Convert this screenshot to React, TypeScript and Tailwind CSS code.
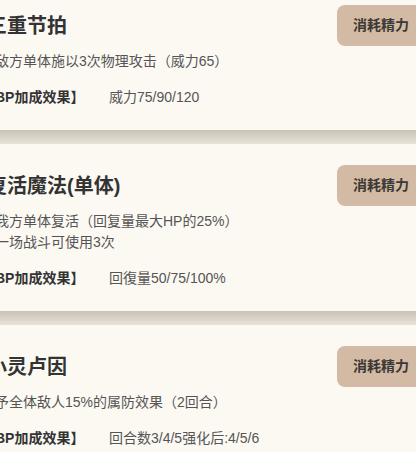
import React from 'react';

type Skill = {
  name: string;
  desc: string[];
  bp: string;
};

const skills: Skill[] = [
  { name: '三重节拍', desc: ['对敌方单体施以3次物理攻击（威力65）'], bp: '威力75/90/120' },
  { name: '复活魔法(单体)', desc: ['对我方单体复活（回复量最大HP的25%）', '每一场战斗可使用3次'], bp: '回復量50/75/100%' },
  { name: '小灵卢因', desc: ['给予全体敌人15%的属防效果（2回合）'], bp: '回合数3/4/5强化后:4/5/6' },
];

function SkillCard({ skill }: { skill: Skill }) {
  return (
    <div className="bg-[#fcf9f3] pt-[21px] pb-[22px] pr-[16px]">
      <div className="flex items-center justify-between h-[41px]">
        <h2 className="ml-[6px] text-[20px] leading-[28px] font-bold text-[#333]">{skill.name}</h2>
        <button className="h-[41px] px-4 rounded-lg bg-[#d2baa5] text-[14px] font-bold text-[#3c3833]">
          消耗精力
        </button>
      </div>
      <div className="mt-[5px] text-[14px] leading-[21px] text-[#555]">
        {skill.desc.map((line) => (
          <p key={line}>{line}</p>
        ))}
      </div>
      <div className="mt-[15px] flex text-[14px] leading-[21px]">
        <span className="w-[128px] shrink-0 font-bold text-[#333]">【BP加成效果】</span>
        <span className="text-[#555]">{skill.bp}</span>
      </div>
    </div>
  );
}

export default function App() {
  return (
    <div
      className="w-[416px] h-[452px] overflow-hidden bg-[#fcf9f3]"
      style={{ fontFamily: '"Liberation Sans", "Noto Sans CJK SC", sans-serif' }}
    >
      <div className="-mt-[16px] -ml-[19px] w-[460px]">
        {skills.map((s, i) => (
          <React.Fragment key={s.name}>
            {i > 0 && <div className="h-[14px] bg-linear-to-b from-[#c8c2b7] to-[#e8e2d8]" />}
            <SkillCard skill={s} />
          </React.Fragment>
        ))}
      </div>
    </div>
  );
}
